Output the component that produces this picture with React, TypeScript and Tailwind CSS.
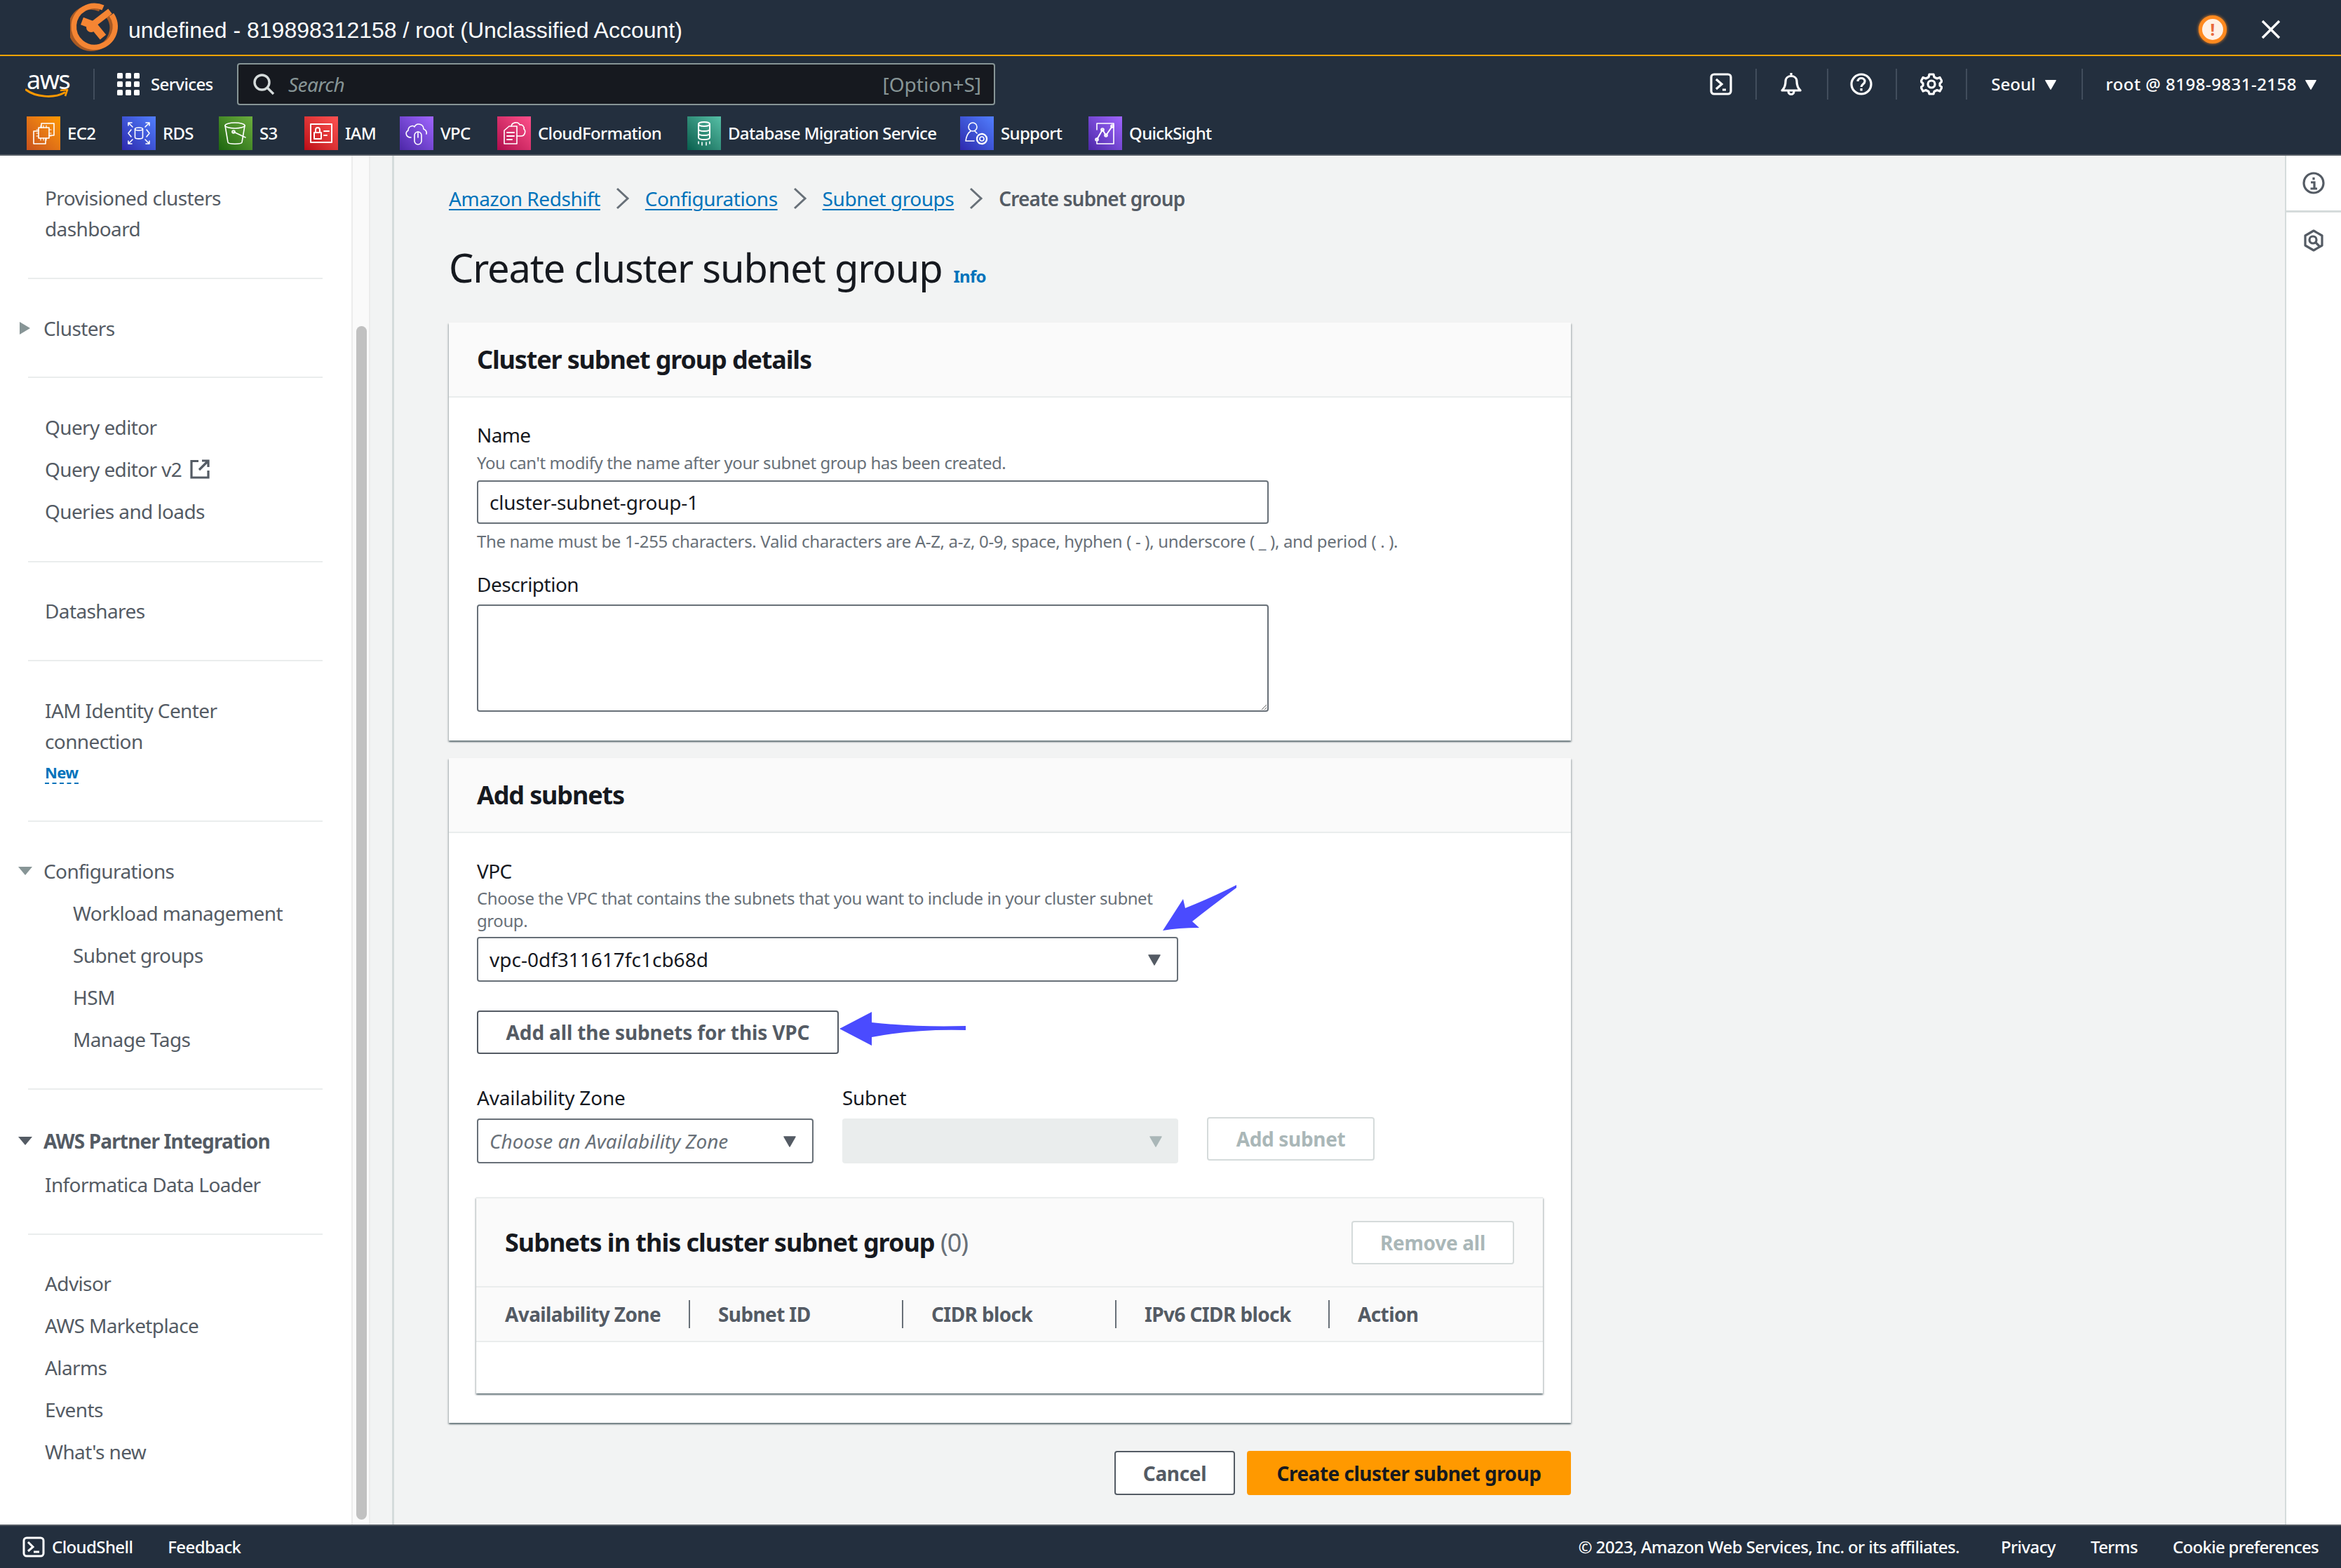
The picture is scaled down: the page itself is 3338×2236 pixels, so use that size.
import React from "react";

const F = "font-['Noto_Sans','Open_Sans',sans-serif]";

function Caret({ color = "#545b64", size = 20, className = "" }: { color?: string; size?: number; className?: string }) {
  return (
    <svg width={size} height={size} viewBox="0 0 20 20" className={"shrink-0 " + className}>
      <path d="M2 4 H18 L10 18 Z" fill={color} stroke={color} strokeWidth="1.5" strokeLinejoin="round" />
    </svg>
  );
}

function Logo() {
  return (
    <svg width="70" height="72" viewBox="0 0 70 72" className="shrink-0">
      <path d="M56 18 A29.5 29.5 0 1 1 44 8" transform="translate(-1.5 2)" fill="none" stroke="#a95a24" strokeWidth="7" />
      <path d="M59 18 A29.5 29.5 0 1 1 47 8" fill="none" stroke="#f58533" strokeWidth="7.5" />
      <path d="M17 27 L33 33 L47 50" fill="none" stroke="#f58533" strokeWidth="11" />
      <path d="M31 33 L57 13" fill="none" stroke="#f58533" strokeWidth="9" />
      <circle cx="30" cy="36" r="7" fill="#f58533" />
    </svg>
  );
}

function AwsLogo() {
  return (
    <div className="relative w-[64px] h-[44px] shrink-0">
      <span className="block font-['Noto_Sans',sans-serif] text-[36px] leading-[32px] text-white tracking-[-1.5px] pl-[2px]">aws</span>
      <svg width="64" height="18" viewBox="0 0 64 18" className="absolute left-0 top-[27px]">
        <path d="M1 3 C14 13 40 16 56 7" fill="none" stroke="#f90" strokeWidth="3" strokeLinecap="round" />
        <path d="M50 4 L60 3 L57 12" fill="none" stroke="#f90" strokeWidth="2.6" strokeLinejoin="round" />
      </svg>
    </div>
  );
}

function Grid() {
  const cells = Array.from({ length: 9 });
  return (
    <div className="grid grid-cols-3 gap-[4px] w-[32px] shrink-0">
      {cells.map((_, i) => (
        <div key={i} className="w-[8px] h-[8px] rounded-[1.5px] bg-white" />
      ))}
    </div>
  );
}

function Sep({ className = "" }: { className?: string }) {
  return <div className={"w-[2px] h-[44px] bg-[#414d5c] shrink-0 " + className} />;
}

function SvcIcon({ grad, children, w = 48 }: { grad: string; children: React.ReactNode; w?: number }) {
  return (
    <div className={"h-[48px] shrink-0 flex items-center justify-center " + grad} style={{ width: w }}>
      <svg width="36" height="36" viewBox="0 0 36 36" fill="none" stroke="#fff" strokeWidth="1.6" strokeLinejoin="round" strokeLinecap="round">
        {children}
      </svg>
    </div>
  );
}

const shortcuts: { label: string; grad: string; mr: string; icon: React.ReactNode }[] = [
  {
    label: "EC2",
    grad: "bg-linear-to-tr from-[#c8511b] to-[#ff9900]",
    mr: "w-[136px]",
    icon: (
      <>
        <path d="M15 10 V4 H33 V21 H26" />
        <path d="M10 15 H4 V33 H21 V26" />
        <rect x="11" y="10" width="15" height="15" />
        <path d="M14 7 V10 M18 7 V10 M22 7 V10 M14 25 V28 M18 25 V28 M22 25 V28 M8 13 H11 M8 18 H11 M8 22 H11 M26 13 H29 M26 18 H29 M26 22 H29" strokeWidth="1.2" />
      </>
    ),
  },
  {
    label: "RDS",
    grad: "bg-linear-to-tr from-[#2e27ad] to-[#527fff]",
    mr: "w-[138px]",
    icon: (
      <>
        <ellipse cx="18" cy="12" rx="5.5" ry="2" />
        <path d="M12.5 12 V24 C12.5 26.5 23.5 26.5 23.5 24 V12" />
        <path d="M7 13 L3 18 L7 23 M29 13 L33 18 L29 23" />
        <path d="M3 7 V3 H8 M3 3 L9 9 M33 7 V3 H28 M33 3 L27 9 M3 29 V33 H8 M3 33 L9 27 M33 29 V33 H28 M33 33 L27 27" />
      </>
    ),
  },
  {
    label: "S3",
    grad: "bg-linear-to-tr from-[#1b660f] to-[#6cae3e]",
    mr: "w-[122px]",
    icon: (
      <>
        <ellipse cx="17" cy="7" rx="14" ry="4" />
        <path d="M3 7 L7 31 C8 34 26 34 27 31 L31 7" />
        <circle cx="15" cy="16" r="2" />
        <path d="M15 16 L32 24" />
      </>
    ),
  },
  {
    label: "IAM",
    grad: "bg-linear-to-tr from-[#bd0816] to-[#ff5252]",
    mr: "w-[136px]",
    icon: (
      <>
        <rect x="3" y="5" width="30" height="26" strokeWidth="2" />
        <rect x="8" y="17" width="10" height="9" strokeWidth="2" />
        <path d="M10 17 V13 C10 9 16 9 16 13 V17" strokeWidth="2" />
        <path d="M22 15 H29 M22 21 H26" strokeWidth="2" />
      </>
    ),
  },
  {
    label: "VPC",
    grad: "bg-linear-to-tr from-[#4d27a8] to-[#a166ff]",
    mr: "w-[139px]",
    icon: (
      <>
        <path d="M10 24 C3 24 1 17 6 14 C6 8 13 6 15 9 C18 2 28 5 28 12 C31 13 33 16 32 19" />
        <rect x="15" y="16" width="10" height="18" rx="5" />
        <path d="M20 16 V24" />
      </>
    ),
  },
  {
    label: "CloudFormation",
    grad: "bg-linear-to-tr from-[#b0084d] to-[#ff4f8b]",
    mr: "w-[271px]",
    icon: (
      <>
        <path d="M11 8 H22 V33 H4 V14 Z" />
        <path d="M8 17 H18 M8 22 H18 M8 27 H15" strokeWidth="2" />
        <path d="M14 8 C15 2 24 1 26 6 C30 5 33 9 32 12 C35 14 34 22 28 22 H22" />
      </>
    ),
  },
  {
    label: "Database Migration Service",
    grad: "bg-linear-to-tr from-[#055f4e] to-[#56c0a7]",
    mr: "w-[389px]",
    icon: (
      <>
        <ellipse cx="18" cy="5" rx="8" ry="3" strokeWidth="2" />
        <path d="M10 5 V24 C10 28 26 28 26 24 V5 M10 12 C10 16 26 16 26 12 M10 18 C10 22 26 22 26 18" strokeWidth="2" />
        <path d="M10 30 V33 M15 31 V35 M21 31 V35 M26 30 V33" />
      </>
    ),
  },
  {
    label: "Support",
    grad: "bg-linear-to-tr from-[#2e27ad] to-[#527fff]",
    mr: "w-[183px]",
    icon: (
      <>
        <circle cx="12" cy="9" r="6" />
        <path d="M2 29 C3 21 6 17 9 15 M15 15 C16 16 17 17 18 18 M2 29 H14" />
        <circle cx="25" cy="26" r="3" />
        <circle cx="25" cy="26" r="7" strokeDasharray="3 1.5" strokeWidth="2.4" />
      </>
    ),
  },
  {
    label: "QuickSight",
    grad: "bg-linear-to-tr from-[#4d27a8] to-[#a166ff]",
    mr: "",
    icon: (
      <>
        <path d="M6 13 V4 H30 V33 H6 V30" />
        <path d="M6 27 L14 13 L19 21 L28 8" strokeWidth="2" />
        <circle cx="6" cy="27" r="2" />
        <circle cx="14" cy="13" r="2" />
        <circle cx="19" cy="21" r="2" />
        <circle cx="28" cy="8" r="2" />
      </>
    ),
  },
];

function Divider({ className = "" }: { className?: string }) {
  return <div className={"h-[2px] bg-[#eaeded] ml-[40px] w-[420px] shrink-0 " + className} />;
}

function Item({ children, indent = false }: { children: React.ReactNode; indent?: boolean }) {
  return (
    <div className={"h-[60px] leading-[60px] text-[28px] tracking-[-0.022em] text-[#545b64] flex items-center " + (indent ? "pl-[104px]" : "pl-[64px]")}>
      {children}
    </div>
  );
}

function Group({ label, open, bold = false }: { label: string; open: boolean; bold?: boolean }) {
  return (
    <div className={"h-[60px] text-[28px] text-[#545b64] flex items-center pl-[26px] " + (bold ? "font-bold tracking-[-0.03em]" : "tracking-[-0.022em]")}>
      <div className="w-[36px] shrink-0">
        {open ? (
          <svg width="20" height="16" viewBox="0 0 20 16"><path d="M0 2 H20 L10 14 Z" fill={bold ? "#545b64" : "#879596"} /></svg>
        ) : (
          <svg width="18" height="20" viewBox="0 0 18 20"><path d="M2 1 L17 10 L2 19 Z" fill="#879596" /></svg>
        )}
      </div>
      {label}
    </div>
  );
}

function Sidebar() {
  return (
    <div className="w-[501px] shrink-0 h-full bg-white flex flex-col pt-[38px]">
      <div className="pl-[64px] text-[28px] tracking-[-0.022em] leading-[44px] text-[#545b64]">
        Provisioned clusters
        <br />
        dashboard
      </div>
      <Divider className="mt-[48px]" />
      <div className="mt-[40px]"><Group label="Clusters" open={false} /></div>
      <Divider className="mt-[39px]" />
      <div className="mt-[40px]">
        <Item>Query editor</Item>
        <Item>
          Query editor v2
          <svg width="28" height="28" viewBox="0 0 28 28" className="ml-[12px]" fill="none" stroke="#545b64" strokeWidth="3.2">
            <path d="M12 2.5 H2 V26 H26 V16" />
            <path d="M17 2 H26 V11 M26 2 L13 15" />
          </svg>
        </Item>
        <Item>Queries and loads</Item>
      </div>
      <Divider className="mt-[41px]" />
      <div className="mt-[39px]"><Item>Datashares</Item></div>
      <Divider className="mt-[40px]" />
      <div className="mt-[48px] pl-[64px] text-[28px] tracking-[-0.022em] leading-[44px] text-[#545b64]">
        IAM Identity Center
        <br />
        connection
        <div className="h-[45px] flex items-center">
          <span className="text-[22px] leading-[30px] font-bold text-[#0073bb] border-b-2 border-dashed border-[#0073bb]">New</span>
        </div>
      </div>
      <Divider className="mt-[46px]" />
      <div className="mt-[40px]"><Group label="Configurations" open /></div>
      <Item indent>Workload management</Item>
      <Item indent>Subnet groups</Item>
      <Item indent>HSM</Item>
      <Item indent>Manage Tags</Item>
      <Divider className="mt-[40px]" />
      <div className="mt-[43px]"><Group label="AWS Partner Integration" open bold /></div>
      <div className="mt-[2px]"><Item>Informatica Data Loader</Item></div>
      <Divider className="mt-[40px]" />
      <div className="mt-[39px]">
        <Item>Advisor</Item>
        <Item>AWS Marketplace</Item>
        <Item>Alarms</Item>
        <Item>Events</Item>
        <Item>What's new</Item>
      </div>
    </div>
  );
}

function Scrollbar() {
  return (
    <div className="w-[27px] shrink-0 h-full bg-[#fafafa] border-x-2 border-[#ececec] pt-[243px] pb-[7px] pl-[5px]">
      <div className="w-[15px] h-full rounded-full bg-[#c1c1c1]" />
    </div>
  );
}

const cardShadow = "shadow-[0_2px_2px_rgba(0,28,36,0.5),2px_2px_2px_rgba(0,28,36,0.1),-2px_2px_2px_rgba(0,28,36,0.1)]";

function Card({ title, children, className = "" }: { title: string; children: React.ReactNode; className?: string }) {
  return (
    <div className={"w-[1600px] bg-white flex flex-col " + cardShadow + " " + className}>
      <div className="h-[107px] shrink-0 bg-[#fafafa] border-b-2 border-[#eaeded] pl-[40px] flex items-center text-[36px] font-bold tracking-[-0.032em] text-[#16191f]">
        {title}
      </div>
      {children}
    </div>
  );
}

function Label({ children, className = "" }: { children: React.ReactNode; className?: string }) {
  return <div className={"h-[40px] leading-[40px] text-[28px] text-[#16191f] " + className}>{children}</div>;
}

function Select({ children, w, disabled = false, italic = false }: { children?: React.ReactNode; w: string; disabled?: boolean; italic?: boolean }) {
  return (
    <div
      className={
        "h-[64px] rounded-[4px] flex items-center justify-between pl-[16px] pr-[22px] text-[28px] " +
        w +
        (disabled ? " bg-[#eaeded]" : " bg-white border-2 border-[#687078]") +
        (italic ? " italic text-[#687078]" : " text-[#16191f]")
      }
    >
      <span>{children}</span>
      <Caret color={disabled ? "#aab7b8" : "#545b64"} />
    </div>
  );
}

function Crumb({ children }: { children: React.ReactNode }) {
  return <span className="text-[#0073bb] underline underline-offset-[4px] decoration-2 tracking-[-0.016em]">{children}</span>;
}

function Chev() {
  return (
    <svg width="22" height="32" viewBox="0 0 22 32" fill="none" stroke="#687078" strokeWidth="3" className="mx-[21px] shrink-0">
      <path d="M3 2 L18 16 L3 30" />
    </svg>
  );
}

function Main() {
  const cols = ["Availability Zone", "Subnet ID", "CIDR block", "IPv6 CIDR block", "Action"];
  return (
    <div className="flex-1 h-full bg-[#f2f3f3] pl-[78px] pt-[39px] relative">
      <div className="h-[44px] flex items-center text-[28px]">
        <Crumb>Amazon Redshift</Crumb>
        <Chev />
        <Crumb>Configurations</Crumb>
        <Chev />
        <Crumb>Subnet groups</Crumb>
        <Chev />
        <span className="font-semibold text-[#545b64] tracking-[-0.03em]">Create subnet group</span>
      </div>
      <div className="h-[70px] mt-[41px] flex items-baseline leading-[70px] text-[56px] tracking-[-0.021em] text-[#16191f]">
        Create cluster subnet group
        <span className="ml-[16px] text-[24px] font-bold tracking-[-0.03em] text-[#0073bb]">Info</span>
      </div>

      <Card title="Cluster subnet group details" className="mt-[44px] h-[596px]">
        <div className="pl-[40px] pt-[33px]">
          <Label className="tracking-[-0.022em]">Name</Label>
          <div className="mt-[2px] h-[36px] leading-[36px] text-[24px] tracking-[-0.018em] text-[#687078]">You can't modify the name after your subnet group has been created.</div>
          <div className="mt-[7px] w-[1129px] h-[62px] border-2 border-[#687078] rounded-[4px] bg-white flex items-center pl-[16px] text-[28px] tracking-[-0.008em] text-[#16191f]">
            cluster-subnet-group-1
          </div>
          <div className="mt-[7px] h-[36px] leading-[36px] text-[24px] tracking-[-0.014em] text-[#687078]">
            The name must be 1-255 characters. Valid characters are A-Z, a-z, 0-9, space, hyphen ( - ), underscore ( _ ), and period ( . ).
          </div>
          <Label className="mt-[23px] tracking-[-0.018em]">Description</Label>
          <textarea readOnly className="block mt-[9px] w-[1129px] h-[153px] border-2 border-[#687078] rounded-[4px] bg-white" />
        </div>
      </Card>

      <Card title="Add subnets" className="mt-[25px] h-[948px]">
        <div className="pl-[40px] pt-[34px] relative">
          <Label className="tracking-[-0.022em]">VPC</Label>
          <div className="mt-[3px] w-[1010px] leading-[32px] text-[24px] tracking-[-0.018em] text-[#687078]">
            Choose the VPC that contains the subnets that you want to include in your cluster subnet group.
          </div>
          <div className="mt-[7px]"><Select w="w-[1000px]">vpc-0df311617fc1cb68d</Select></div>
          <div className="mt-[41px] w-[516px] h-[62px] border-2 border-[#545b64] rounded-[4px] flex items-center justify-center text-[28px] font-bold tracking-[-0.005em] text-[#545b64]">
            Add all the subnets for this VPC
          </div>
          <div className="mt-[42px] flex gap-[41px] items-start">
            <div>
              <Label className="tracking-[-0.006em]">Availability Zone</Label>
              <div className="mt-[10px]"><Select w="w-[480px]" italic>Choose an Availability Zone</Select></div>
            </div>
            <div>
              <Label className="tracking-[-0.01em]">Subnet</Label>
              <div className="mt-[10px]"><Select w="w-[479px]" disabled /></div>
            </div>
            <div className="mt-[48px] w-[239px] h-[62px] border-2 border-[#d5dbdb] rounded-[4px] flex items-center justify-center text-[28px] font-bold tracking-[-0.012em] text-[#aab7b8]">
              Add subnet
            </div>
          </div>

          <div className={"mt-[48px] w-[1521px] -ml-[1px] h-[280px] bg-white border-t-2 border-[#eaeded] flex flex-col " + cardShadow}>
            <div className="h-[127px] bg-[#fafafa] border-b-2 border-[#eaeded] flex items-center justify-between pl-[41px] pr-[41px] shrink-0">
              <div className="text-[36px] font-bold tracking-[-0.028em] text-[#16191f]">
                Subnets in this cluster subnet group <span className="font-normal text-[#687078]">(0)</span>
              </div>
              <div className="w-[232px] h-[62px] bg-white border-2 border-[#d5dbdb] rounded-[4px] flex items-center justify-center text-[28px] font-bold tracking-[-0.01em] text-[#aab7b8]">
                Remove all
              </div>
            </div>
            <div className="h-[78px] bg-[#fafafa] border-b-2 border-[#eaeded] flex items-center pl-[41px] shrink-0">
              {cols.map((c, i) => (
                <div key={c} className="w-[304px] h-[40px] leading-[40px] text-[28px] font-bold tracking-[-0.022em] text-[#545b64] relative shrink-0">
                  {c}
                  {i < 4 && <div className="absolute left-[262px] top-0 w-[2px] h-[40px] bg-[#687078]" />}
                </div>
              ))}
            </div>
          </div>

          <svg width="112" height="72" viewBox="0 0 112 72" className="absolute left-[1015px] top-[71px]">
            <path d="M3 68 L32 23 L35 36 Q75 20 108 3 L108 7 Q70 35 45 55 L55 64 Q25 64 3 68 Z" fill="#4a4bff" />
          </svg>
          <svg width="186" height="54" viewBox="0 0 186 54" className="absolute left-[555px] top-[251px]">
            <path d="M2 28 L48 4 L48 19 Q110 26 182 24 L182 30 Q110 28 48 40 L48 52 Z" fill="#4a4bff" />
          </svg>
        </div>
      </Card>

      <div className="w-[1600px] mt-[40px] flex justify-end gap-[17px]">
        <div className="w-[172px] h-[63px] bg-white border-2 border-[#545b64] rounded-[4px] flex items-center justify-center text-[28px] font-bold tracking-[-0.012em] text-[#545b64]">
          Cancel
        </div>
        <div className="w-[462px] h-[63px] bg-[#ff9900] rounded-[4px] flex items-center justify-center text-[28px] font-bold tracking-[-0.018em] text-[#16191f]">
          Create cluster subnet group
        </div>
      </div>
    </div>
  );
}

function RightRail() {
  return (
    <div className="w-[80px] shrink-0 h-full bg-white border-l-2 border-[#d5dbdb] flex flex-col">
      <div className="h-[81px] flex items-center justify-center border-b-[3px] border-[#d5dbdb]">
        <svg width="32" height="32" viewBox="0 0 32 32" fill="none" stroke="#545b64" strokeWidth="3.2">
          <circle cx="16" cy="16" r="14" />
          <path d="M16 8 V11.5 M12 15 H17 V24 M11.5 24 H21" />
        </svg>
      </div>
      <div className="h-[80px] flex items-center justify-center">
        <svg width="32" height="32" viewBox="0 0 32 32" fill="none" stroke="#545b64" strokeWidth="3.2">
          <path d="M16 2 L28 9 V23 L16 30 L4 23 V9 Z" strokeLinejoin="round" />
          <circle cx="15" cy="15" r="5" />
          <path d="M18.5 18.5 L24 24" />
        </svg>
      </div>
    </div>
  );
}

export default function App() {
  return (
    <div className={"w-[3338px] h-[2236px] flex flex-col overflow-hidden " + F}>
      <div className="h-[80px] shrink-0 bg-[#232f3e] border-b-2 border-[#ffa400] flex items-center pl-[100px] pr-[86px]">
        <Logo />
        <span className="ml-[13px] mt-[8px] text-[32px] text-white font-['Liberation_Sans',sans-serif]">undefined - 819898312158 / root (Unclassified Account)</span>
        <div className="ml-auto mt-[6px] w-[40px] h-[40px] rounded-full bg-[#fff1e6] border-[5px] border-[#ff8a1f] shadow-[0_0_4px_#ff8a1f] flex items-center justify-center text-[24px] leading-none text-[#e8693b] font-bold">!</div>
        <svg width="28" height="28" viewBox="0 0 28 28" className="ml-[49px] mt-[6px]" stroke="#fff" strokeWidth="3.4"><path d="M2 2 L26 26 M26 2 L2 26" /></svg>
      </div>

      <div className="h-[142px] shrink-0 bg-[#232f3e] border-b-2 border-[#545b64] flex flex-col">
        <div className="h-[80px] shrink-0 flex items-center pl-[36px] text-white">
          <AwsLogo />
          <Sep className="ml-[33px]" />
          <div className="ml-[32px]"><Grid /></div>
          <span className="ml-[16px] w-[123px] text-[24px] font-medium tracking-[-0.025em]">Services</span>
          <div className="w-[1081px] h-[60px] bg-[#16191f] border-2 border-[#879596] rounded-[4px] flex items-center pl-[20px] pr-[18px] text-[28px] text-[#879596]">
            <svg width="32" height="32" viewBox="0 0 32 32" fill="none" stroke="#d5dbdb" strokeWidth="3.4">
              <circle cx="13.5" cy="13.5" r="10.5" />
              <path d="M21 21 L30 30" />
            </svg>
            <span className="ml-[19px] italic tracking-[-0.02em]">Search</span>
            <span className="ml-auto">[Option+S]</span>
          </div>
          <div className="ml-auto flex items-center pr-[34px]">
            <svg width="32" height="32" viewBox="0 0 32 32" fill="none" stroke="#fff" strokeWidth="3.2">
              <rect x="2" y="2" width="28" height="28" rx="4" />
              <path d="M9 9 L17 16 L9 23 M18 24 H23" />
            </svg>
            <Sep className="ml-[33px]" />
            <svg width="32" height="34" viewBox="0 0 32 34" fill="none" stroke="#fff" strokeWidth="3.2" className="ml-[33px]">
              <path d="M16 1 V4 M3 26 C7 22 8 18 8 13 C8 3 24 3 24 13 C24 18 25 22 29 26 Z" strokeLinejoin="round" />
              <path d="M12 27 C12 33 20 33 20 27" />
            </svg>
            <Sep className="ml-[35px]" />
            <svg width="32" height="32" viewBox="0 0 32 32" fill="none" stroke="#fff" strokeWidth="3.2" className="ml-[31px]">
              <circle cx="16" cy="16" r="14" />
              <path d="M11 12 C11 6 21 6 21 12 C21 16 16 16 16 20 M16 22 V25.5" />
            </svg>
            <Sep className="ml-[33px]" />
            <svg width="32" height="32" viewBox="0 0 32 32" fill="none" stroke="#fff" strokeWidth="3.2" className="ml-[33px]">
              <circle cx="16" cy="16" r="5" />
              <path d="M13 2 H19 L20 6 L24 8 L28 6.5 L31 12 L28 15 V18 L31 20.5 L28 26 L24 24.5 L20 26.5 L19 30 H13 L12 26.5 L8 24.5 L4 26 L1 20.5 L4 18 V15 L1 12 L4 6.5 L8 8 L12 6 Z" strokeLinejoin="round" />
            </svg>
            <Sep className="ml-[33px]" />
            <span className="ml-[34px] text-[24px] font-medium">Seoul</span>
            <Caret color="#fff" size={18} className="ml-[12px]" />
            <Sep className="ml-[35px]" />
            <span className="ml-[33px] text-[24px] font-medium tracking-[0.02em]">root @ 8198-9831-2158</span>
            <Caret color="#fff" size={18} className="ml-[11px]" />
          </div>
        </div>
        <div className="h-[48px] mt-[6px] shrink-0 flex items-center pl-[38px] text-[24px] font-medium tracking-[-0.028em] text-white">
          {shortcuts.map((s) => (
            <div key={s.label} className={"flex items-center gap-[10px] shrink-0 " + s.mr}>
              <SvcIcon grad={s.grad}>{s.icon}</SvcIcon>
              <span>{s.label}</span>
            </div>
          ))}
        </div>
      </div>

      <div className="h-[1952px] shrink-0 flex">
        <Sidebar />
        <Scrollbar />
        <div className="w-[34px] shrink-0 h-full bg-[#f2f3f3] border-r-[3px] border-[#d5dbdb]" />
        <Main />
        <RightRail />
      </div>

      <div className="h-[62px] shrink-0 bg-[#232f3e] border-t-2 border-[#545b64] flex items-center text-[24px] font-medium tracking-[-0.025em] text-white pl-[32px] pr-[32px]">
        <svg width="32" height="30" viewBox="0 0 32 30" fill="none" stroke="#fff" strokeWidth="3">
          <rect x="2" y="2" width="28" height="26" rx="4" />
          <path d="M8 8 L15 15 L8 21 M16 22 H24" />
        </svg>
        <span className="ml-[10px]">CloudShell</span>
        <span className="ml-[50px]">Feedback</span>
        <span className="ml-auto">© 2023, Amazon Web Services, Inc. or its affiliates.</span>
        <span className="ml-[59px]">Privacy</span>
        <span className="ml-[50px]">Terms</span>
        <span className="ml-[50px] tracking-[-0.03em]">Cookie preferences</span>
      </div>
    </div>
  );
}
